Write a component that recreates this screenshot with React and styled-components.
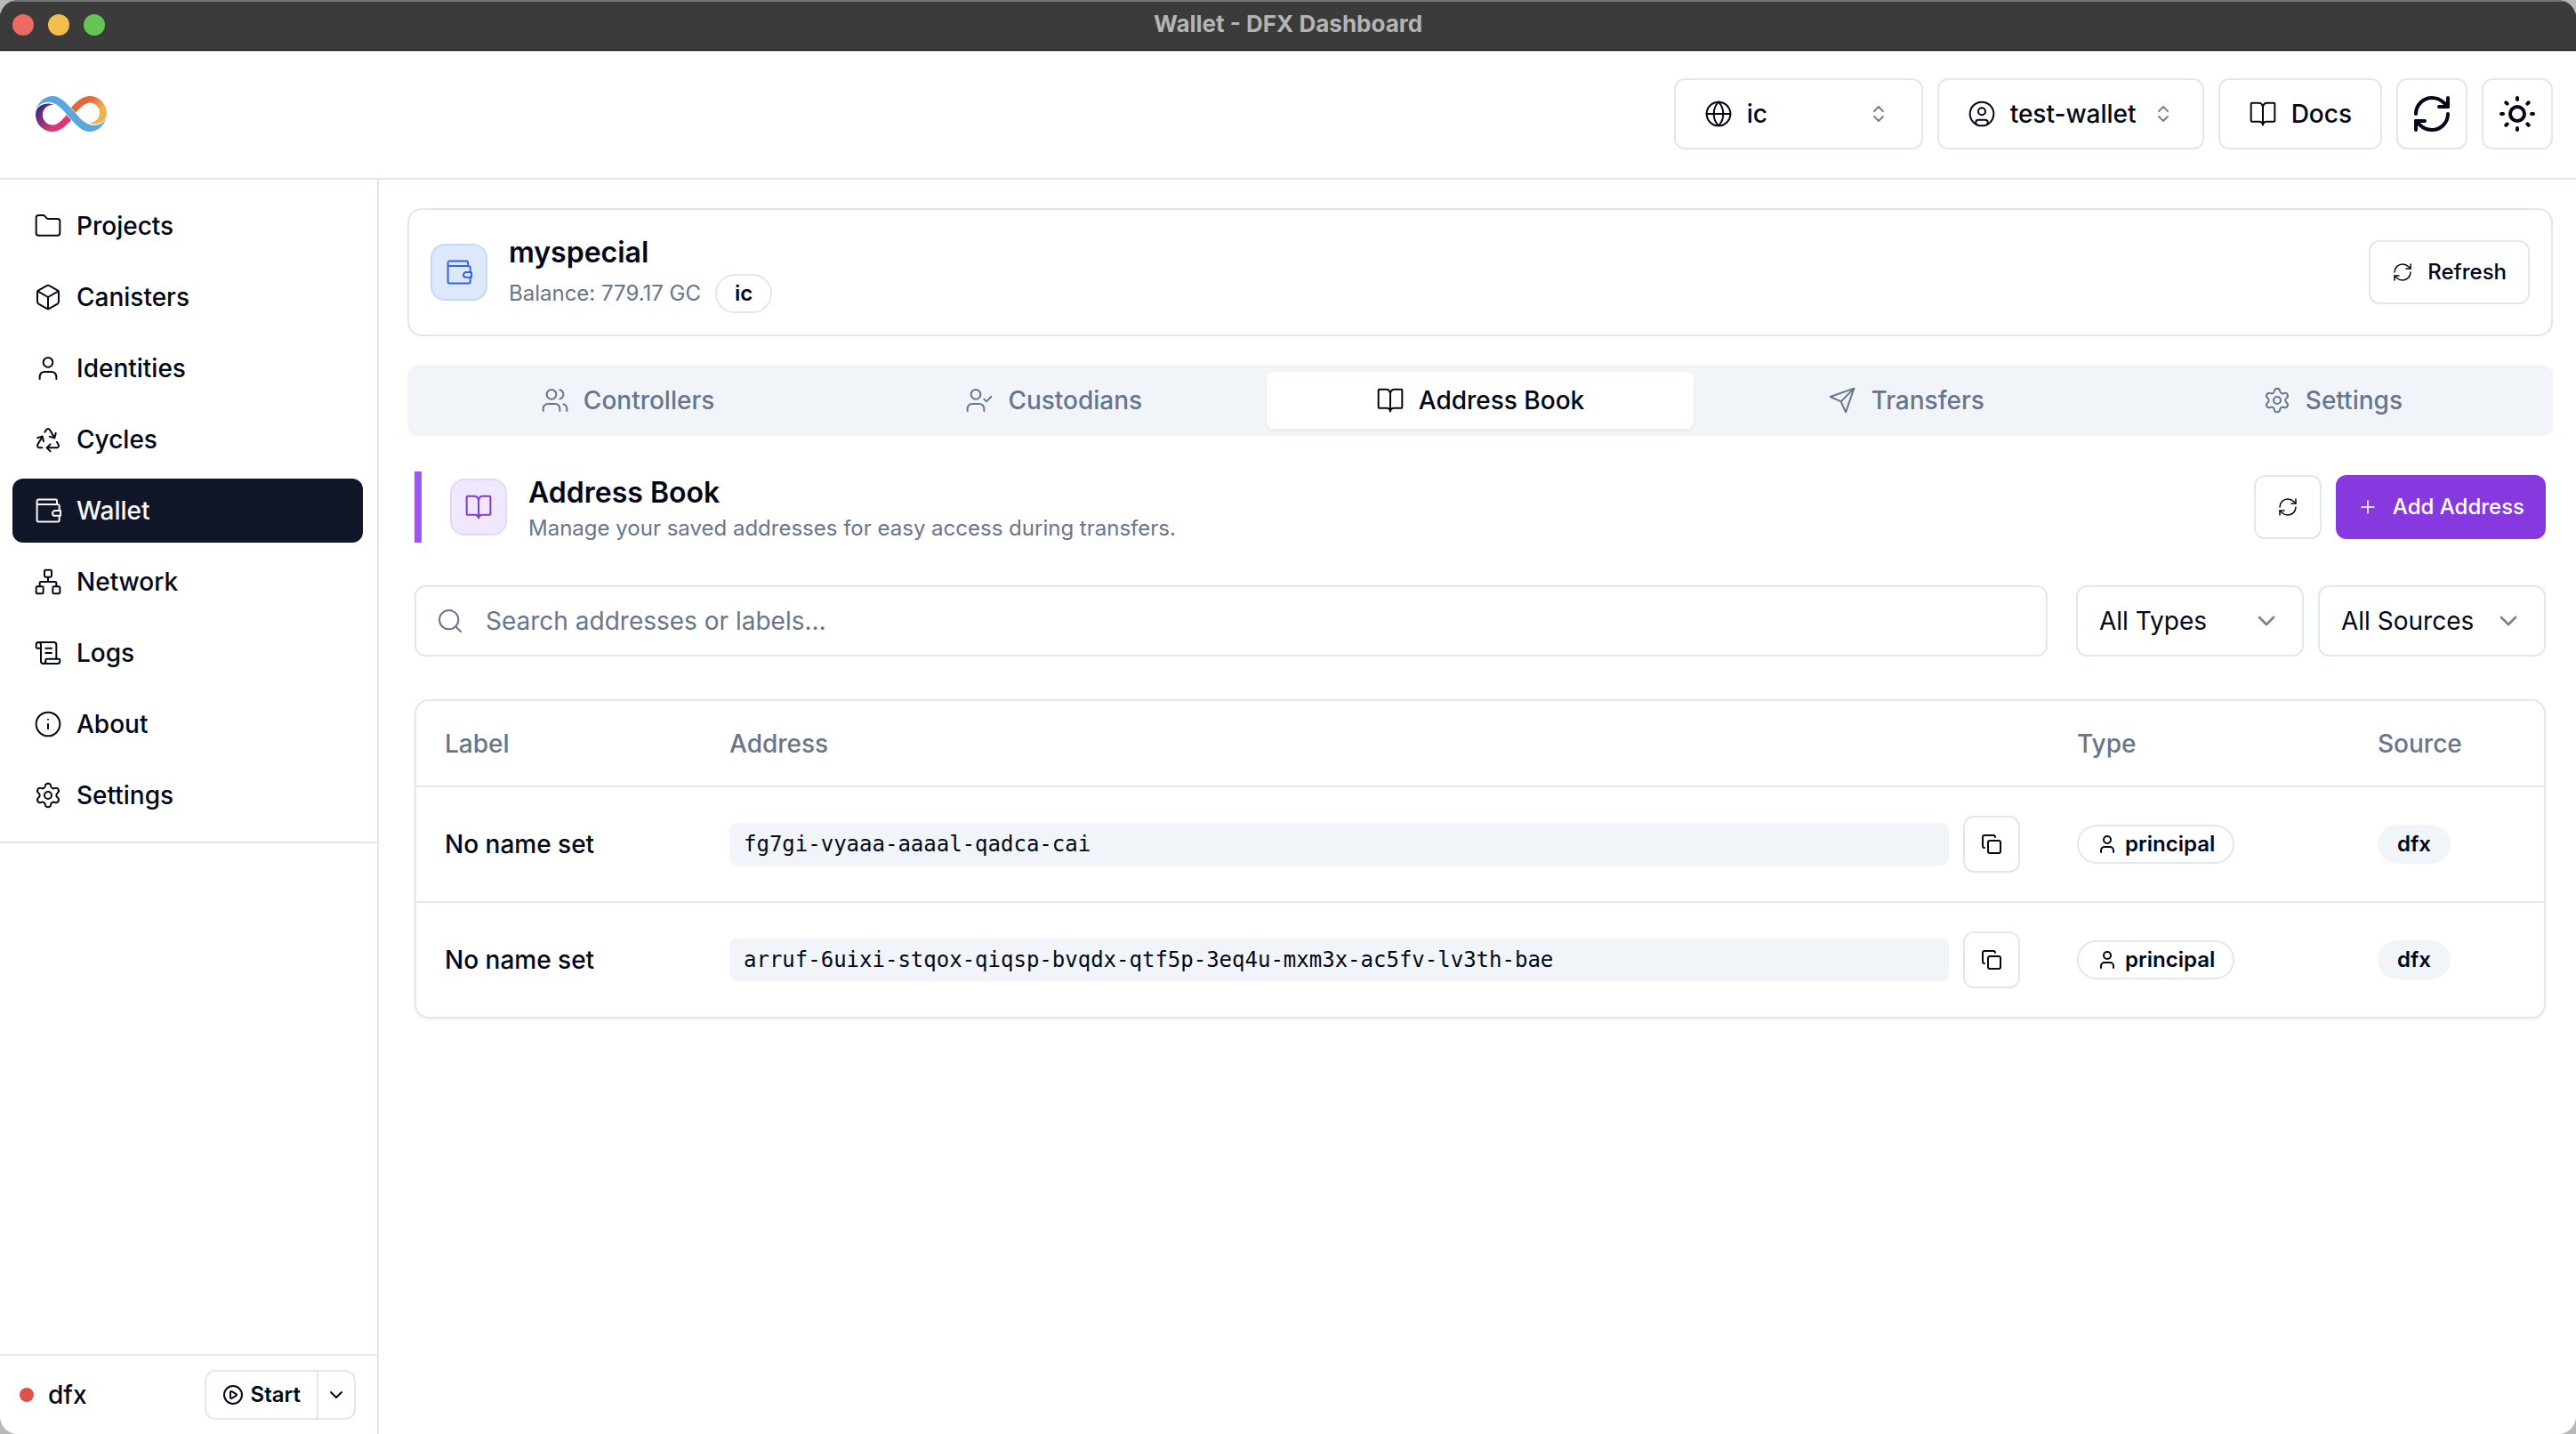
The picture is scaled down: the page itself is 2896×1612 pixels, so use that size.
import React from "react";
import styled, { createGlobalStyle, css } from "styled-components";
import {
  Box,
  ChevronDown,
  ChevronsUpDown,
  CirclePlay,
  CircleUser,
  Copy,
  Folder,
  Globe,
  Info,
  Network,
  Plus,
  Recycle,
  RefreshCw,
  ScrollText,
  Search,
  Settings,
  SunMedium,
  User,
  UserCheck,
  Users,
} from "lucide-react";

const color = {
  ink: "#020817",
  muted: "#67758d",
  line: "#e2e7ee",
  soft: "#f1f5fa",
  active: "#121629",
  purple: "#8739e0",
};

const GlobalStyle = createGlobalStyle`
  *, *::before, *::after { box-sizing: border-box; }
  html, body, #root { height: 100%; }
  body {
    margin: 0;
    background: #b9b9b9;
    color: ${color.ink};
    font: 400 28px/40px Inter, "Noto Sans", sans-serif;
    -webkit-font-smoothing: antialiased;
  }
  button, input, select { font: inherit; color: inherit; margin: 0; }
  h1, h2, p { margin: 0; }
  svg { display: block; flex: none; }
`;

const Window = styled.div`
  display: flex;
  flex-direction: column;
  min-height: 100%;
  background: #fff;
  border-radius: 20px;
  overflow: hidden;
`;

const TitleBar = styled.div`
  display: grid;
  grid-template-columns: 1fr auto 1fr;
  align-items: center;
  height: 56px;
  padding: 0 14px;
  background: #3b3b3b;
  box-shadow: inset 0 2px 0 #757575, 0 1px 0 #000, 0 2px 0 #c0c0c0;
  position: relative;
`;

const Lights = styled.div`
  display: flex;
  gap: 16px;
`;

const Light = styled.span`
  width: 24px;
  height: 24px;
  border-radius: 50%;
  background: ${(p) => p.$color};
`;

const WindowTitle = styled.div`
  padding-bottom: 2px;
  font-size: 26px;
  font-weight: 700;
  line-height: 32px;
  color: #b4b4b4;
`;

const Header = styled.header`
  display: flex;
  align-items: center;
  justify-content: space-between;
  height: 146px;
  padding: 0 26px 0 40px;
  border-bottom: 2px solid ${color.line};
`;

const Toolbar = styled.div`
  display: flex;
  gap: 16px;
`;

const outlined = css`
  background: #fff;
  border: 2px solid ${color.line};
  border-radius: 12px;
`;

const Picker = styled.label`
  ${outlined}
  display: flex;
  align-items: center;
  gap: 16px;
  width: ${(p) => p.$width}px;
  height: 80px;
  padding: 0 ${(p) => p.$padEnd ?? p.$pad}px 0 ${(p) => p.$pad}px;
  font-weight: ${(p) => p.$weight};

  select {
    flex: 1;
    min-width: 0;
    padding: 0;
    border: 0;
    background: none;
    appearance: none;
    outline: none;
  }
  svg:last-child { opacity: 0.5; }
`;

const Button = styled.button`
  ${outlined}
  display: inline-flex;
  align-items: center;
  justify-content: center;
  gap: 16px;
  height: 72px;
  padding: 0 24px;
  font-size: 24px;
  font-weight: 500;
  line-height: 32px;
  white-space: nowrap;
`;

const PrimaryButton = styled(Button)`
  border: 0;
  background: ${color.purple};
  color: #fff;
`;

const ToolButton = styled(Button)`
  height: 80px;
  padding: 0 32px;
  font-size: 28px;
  line-height: 40px;
`;

const SquareButton = styled(Button)`
  width: ${(p) => p.$size}px;
  height: ${(p) => p.$size}px;
  padding: 0;
`;

const Body = styled.div`
  display: flex;
  flex: 1;
`;

const Sidebar = styled.aside`
  display: flex;
  flex-direction: column;
  justify-content: space-between;
  flex: none;
  width: 426px;
  border-right: 2px solid ${color.line};
`;

const Nav = styled.nav`
  display: flex;
  flex-direction: column;
  gap: 8px;
  padding: 16px 16px 16px 14px;
  border-bottom: 2px solid ${color.line};
`;

const NavLink = styled.a`
  display: flex;
  align-items: center;
  gap: 16px;
  height: 72px;
  padding: 0 24px;
  border-radius: 12px;
  font-weight: 500;
  text-decoration: none;
  color: ${(p) => (p.$active ? "#f8fafc" : color.ink)};
  background: ${(p) => (p.$active ? color.active : "transparent")};
`;

const Status = styled.div`
  display: flex;
  align-items: center;
  gap: 16px;
  height: 90px;
  padding: 0 24px 0 22px;
  border-top: 2px solid ${color.line};
  font-weight: 500;
`;

const Dot = styled.span`
  width: 16px;
  height: 16px;
  border-radius: 50%;
  background: #dc524b;
`;

const SplitButton = styled.div`
  ${outlined}
  display: flex;
  height: 56px;
  margin-left: auto;
`;

const SplitPart = styled.button`
  display: flex;
  align-items: center;
  gap: 8px;
  padding: 0 ${(p) => p.$pad}px;
  border: 0;
  background: none;
  font-size: 24px;
  font-weight: 600;
  line-height: 32px;

  & + & { border-left: 2px solid ${color.line}; }
`;

const Main = styled.main`
  display: flex;
  flex-direction: column;
  flex: 1;
  min-width: 0;
  padding: 32px 26px 32px 32px;
`;

const WalletCard = styled.section`
  display: flex;
  align-items: center;
  gap: 24px;
  padding: 24px;
  border: 2px solid ${color.line};
  border-radius: 16px;
`;

const tones = {
  blue: { bg: "#dde9fb", line: "#bfdafb", ink: "#3662e8" },
  purple: { bg: "#f0e8fd", line: "#e5d7fb", ink: "#8338df" },
};

const IconTile = styled.div`
  display: grid;
  place-items: center;
  width: 64px;
  height: 64px;
  border-radius: 16px;
  border: 2px solid ${(p) => tones[p.$tone].line};
  background: ${(p) => tones[p.$tone].bg};
  color: ${(p) => tones[p.$tone].ink};
`;

const Heading = styled.div`
  flex: 1;
  min-width: 0;

  h1, h2 {
    font-size: 32px;
    font-weight: 600;
    line-height: 48px;
  }
`;

const Caption = styled.p`
  display: flex;
  align-items: center;
  gap: 16px;
  font-size: 24px;
  line-height: 32px;
  color: ${color.muted};
`;

const Badge = styled.span`
  display: inline-flex;
  align-items: center;
  gap: 8px;
  height: 44px;
  padding: 0 20px;
  border: 2px solid ${(p) => (p.$filled ? color.soft : color.line)};
  border-radius: 22px;
  background: ${(p) => (p.$filled ? color.soft : "#fff")};
  color: ${color.ink};
  font-size: 24px;
  font-weight: 600;
  line-height: 32px;
`;

const Tabs = styled.div`
  display: grid;
  grid-template-columns: repeat(5, 1fr);
  height: 80px;
  margin-top: 32px;
  padding: 8px;
  border-radius: 12px;
  background: ${color.soft};
`;

const Tab = styled.button`
  display: flex;
  align-items: center;
  justify-content: center;
  gap: 16px;
  border: 0;
  border-radius: 8px;
  font-weight: 500;
  color: ${(p) => (p.$active ? color.ink : color.muted)};
  background: ${(p) => (p.$active ? "#fff" : "transparent")};
  box-shadow: ${(p) => (p.$active ? "0 2px 4px rgba(0, 0, 0, 0.05)" : "none")};
`;

const Panel = styled.section`
  padding: 40px 8px 0;
`;

const PanelHead = styled.div`
  display: flex;
  align-items: center;
  gap: 16px;
`;

const PanelTitle = styled.div`
  display: flex;
  flex: 1;
  align-items: center;
  gap: 24px;
  padding-left: 32px;
  border-left: 8px solid #9b56ee;
`;

const Filters = styled.div`
  display: flex;
  gap: 16px;
  margin-top: 48px;
`;

const SearchBox = styled.label`
  ${outlined}
  display: flex;
  align-items: center;
  flex: 1;
  gap: 24px;
  height: 80px;
  margin-right: 16px;
  padding: 0 22px;
  color: ${color.muted};

  input {
    flex: 1;
    min-width: 0;
    padding: 0;
    border: 0;
    outline: none;
    background: none;
  }
  input::placeholder { color: ${color.muted}; opacity: 1; }
`;

const TableCard = styled.div`
  margin-top: 48px;
  border: 2px solid ${color.line};
  border-radius: 16px;
  box-shadow: 0 2px 4px rgba(0, 0, 0, 0.05);
`;

const Table = styled.table`
  width: 100%;
  table-layout: fixed;
  border-spacing: 0;
  text-align: left;

  th {
    height: 97px;
    padding: 0 32px;
    border-bottom: 2px solid ${color.line};
    font-weight: 500;
    color: ${color.muted};
  }
  td { padding: 32px; font-weight: 500; }
  tr:not(:last-child) td { border-bottom: 2px solid ${color.line}; }
`;

const Column = styled.col`
  width: ${(p) => (p.$width ? `${p.$width}px` : "auto")};
`;

const AddressCell = styled.div`
  display: flex;
  align-items: center;
  gap: 16px;
`;

const Code = styled.code`
  flex: 1;
  padding: 8px 16px;
  border-radius: 8px;
  background: ${color.soft};
  font: 400 24px/32px "DejaVu Sans Mono", monospace;
`;

function LogoRing({ fill }) {
  return (
    <path
      fill={fill}
      d="M271.6 0c-20 0-41.9 10.2-65 30.5-10.9 9.5-20.4 19.8-27.5 27.9 0 0 11.3 12.3 23.7 25.5 6.7-7.9 16.3-18.8 27.3-28.4 20.5-18 33.9-21.8 41.5-21.8 28.8 0 52.1 22.8 52.1 50.9 0 27.8-23.4 50.6-52.1 50.9-1.4 0-3-.2-5-.6 8.4 3.6 17.5 6.2 26 6.2 52.8 0 63.1-34.4 63.8-36.9 1.5-6.2 2.4-12.7 2.4-19.4C358.8 38.6 319.6 0 271.6 0z"
    />
  );
}

function Logo() {
  return (
    <svg width="80" height="40" viewBox="0 0 358.8 179.8" role="img" aria-label="Internet Computer">
      <defs>
        <linearGradient id="warm" gradientUnits="userSpaceOnUse" x1="225" y1="20" x2="349" y2="130">
          <stop offset="0.21" stopColor="#e1683a" />
          <stop offset="0.68" stopColor="#efb253" />
        </linearGradient>
        <linearGradient id="cool" gradientUnits="userSpaceOnUse" x1="225" y1="20" x2="349" y2="130">
          <stop offset="0.21" stopColor="#dc3878" />
          <stop offset="0.9" stopColor="#472a80" />
        </linearGradient>
      </defs>
      <LogoRing fill="url(#warm)" />
      <g transform="rotate(180 179.4 89.9)">
        <LogoRing fill="url(#cool)" />
      </g>
      <path
        fill="#55a9de"
        d="M127.3 59.7c-5.8-5.6-34-28.5-61-29.3C18.1 29.2 4 64.2 2.7 68.7 12 29.5 46.4.2 87.2 0c33.3 0 67 32.7 91.9 62.2 0 0 11.4 12.2 23.8 25.4 0 0 14 16.5 28.8 31 5.8 5.6 33.9 28.2 60.9 29 49.5 1.4 63.2-35.6 63.9-38.4-9.1 39.5-43.6 70.4-84.5 70.6-33.3 0-67-32.7-92-62.2 0 0-11.4-12.2-23.8-25.3 0 0-14-18.1-28.9-32.6z"
      />
    </svg>
  );
}

function StrokeIcon({ size = 32, children }) {
  return (
    <svg
      width={size}
      height={size}
      viewBox="0 0 24 24"
      fill="none"
      stroke="currentColor"
      strokeWidth="1.5"
      strokeLinecap="round"
      strokeLinejoin="round"
      aria-hidden="true"
    >
      {children}
    </svg>
  );
}

function WalletIcon({ size }) {
  return (
    <StrokeIcon size={size}>
      <path d="M19.5 6.7V3.6a1 1 0 0 0-1-1H4A1.300 1.300 0 0 0 2.700 3.900V20a1.300 1.300 0 0 0 1.300 1.300h16.200a1.300 1.300 0 0 0 1.300-1.300v-3.500M21.500 12V8a1.300 1.300 0 0 0-1.300-1.300H3" />
      <path d="M22.500 12H18a2.200 2.200 0 0 0 0 4.400h4.500z" />
    </StrokeIcon>
  );
}

function BookIcon({ size }) {
  return (
    <StrokeIcon size={size}>
      <path d="M12 6.200C11.600 4.200 10.300 2.800 8.500 2.800H2.700a.7.7 0 0 0-.7.7v14.300a.7.7 0 0 0 .7.7H9c1.700 0 2.700 1 3 2.700" />
      <path d="M12 6.200c.4-2 1.700-3.400 3.500-3.400h5.800a.7.7 0 0 1 .7.7v14.300a.7.7 0 0 1-.7.7H15c-1.700 0-2.700 1-3 2.700z" />
    </StrokeIcon>
  );
}

function SendIcon({ size }) {
  return (
    <StrokeIcon size={size}>
      <path d="m22 2-7 20-4-9-9-4Z" />
      <path d="M22 2 11 13" />
    </StrokeIcon>
  );
}

const navItems = [
  ["Projects", Folder],
  ["Canisters", Box],
  ["Identities", User],
  ["Cycles", Recycle],
  ["Wallet", WalletIcon],
  ["Network", Network],
  ["Logs", ScrollText],
  ["About", Info],
  ["Settings", Settings],
];

const tabs = [
  ["Controllers", Users],
  ["Custodians", UserCheck],
  ["Address Book", BookIcon],
  ["Transfers", SendIcon],
  ["Settings", Settings],
];

const addresses = [
  "fg7gi-vyaaa-aaaal-qadca-cai",
  "arruf-6uixi-stqox-qiqsp-bvqdx-qtf5p-3eq4u-mxm3x-ac5fv-lv3th-bae",
];

export default function App() {
  return (
    <Window>
      <GlobalStyle />
      <TitleBar>
        <Lights>
          <Light $color="#ec6a5f" />
          <Light $color="#f4be4f" />
          <Light $color="#62c554" />
        </Lights>
        <WindowTitle>Wallet - DFX Dashboard</WindowTitle>
      </TitleBar>

      <Header>
        <Logo />
        <Toolbar>
          <Picker $width={280} $pad={32} $padEnd={36} $weight={500}>
            <Globe size={32} strokeWidth={1.5} />
            <select aria-label="Network">
              <option>ic</option>
            </select>
            <ChevronsUpDown size={24} />
          </Picker>
          <Picker $width={300} $pad={32} $weight={500}>
            <CircleUser size={32} strokeWidth={1.5} />
            <select aria-label="Identity">
              <option>test-wallet</option>
            </select>
            <ChevronsUpDown size={24} />
          </Picker>
          <ToolButton>
            <BookIcon />
            Docs
          </ToolButton>
          <SquareButton $size={80} aria-label="Reload">
            <RefreshCw size={48} strokeWidth={2} />
          </SquareButton>
          <SquareButton $size={80} aria-label="Theme">
            <SunMedium size={48} />
          </SquareButton>
        </Toolbar>
      </Header>

      <Body>
        <Sidebar>
          <Nav>
            {navItems.map(([name, Icon]) => (
              <NavLink key={name} href="#" $active={name === "Wallet"}>
                <Icon size={32} strokeWidth={1.5} />
                {name}
              </NavLink>
            ))}
          </Nav>
          <Status>
            <Dot />
            dfx
            <SplitButton>
              <SplitPart $pad={18}>
                <CirclePlay size={24} strokeWidth={2} />
                Start
              </SplitPart>
              <SplitPart $pad={8} aria-label="More start options">
                <ChevronDown size={24} strokeWidth={2} />
              </SplitPart>
            </SplitButton>
          </Status>
        </Sidebar>

        <Main>
          <WalletCard>
            <IconTile $tone="blue">
              <WalletIcon />
            </IconTile>
            <Heading>
              <h1>myspecial</h1>
              <Caption>
                Balance: 779.17 GC <Badge>ic</Badge>
              </Caption>
            </Heading>
            <Button>
              <RefreshCw size={24} strokeWidth={1.5} />
              Refresh
            </Button>
          </WalletCard>

          <Tabs role="tablist">
            {tabs.map(([name, Icon]) => (
              <Tab key={name} role="tab" aria-selected={name === "Address Book"} $active={name === "Address Book"}>
                <Icon size={32} strokeWidth={1.5} />
                {name}
              </Tab>
            ))}
          </Tabs>

          <Panel>
            <PanelHead>
              <PanelTitle>
                <IconTile $tone="purple">
                  <BookIcon />
                </IconTile>
                <Heading>
                  <h2>Address Book</h2>
                  <Caption>Manage your saved addresses for easy access during transfers.</Caption>
                </Heading>
              </PanelTitle>
              <Button aria-label="Refresh addresses">
                <RefreshCw size={24} strokeWidth={1.5} />
              </Button>
              <PrimaryButton>
                <Plus size={24} strokeWidth={1.5} />
                Add Address
              </PrimaryButton>
            </PanelHead>

            <Filters>
              <SearchBox>
                <Search size={32} strokeWidth={1.5} />
                <input type="text" aria-label="Search" placeholder="Search addresses or labels..." />
              </SearchBox>
              <Picker $width={256} $pad={24} $weight={400}>
                <select aria-label="Type">
                  <option>All Types</option>
                </select>
                <ChevronDown size={32} />
              </Picker>
              <Picker $width={256} $pad={24} $weight={400}>
                <select aria-label="Source">
                  <option>All Sources</option>
                </select>
                <ChevronDown size={32} />
              </Picker>
            </Filters>

            <TableCard>
              <Table>
                <colgroup>
                  <Column $width={320} />
                  <Column />
                  <Column $width={338} />
                  <Column $width={219} />
                </colgroup>
                <thead>
                  <tr>
                    <th>Label</th>
                    <th>Address</th>
                    <th>Type</th>
                    <th>Source</th>
                  </tr>
                </thead>
                <tbody>
                  {addresses.map((address) => (
                    <tr key={address}>
                      <td>No name set</td>
                      <td>
                        <AddressCell>
                          <Code>{address}</Code>
                          <SquareButton $size={64} aria-label="Copy address">
                            <Copy size={24} />
                          </SquareButton>
                        </AddressCell>
                      </td>
                      <td>
                        <Badge>
                          <User size={24} />
                          principal
                        </Badge>
                      </td>
                      <td>
                        <Badge $filled>dfx</Badge>
                      </td>
                    </tr>
                  ))}
                </tbody>
              </Table>
            </TableCard>
          </Panel>
        </Main>
      </Body>
    </Window>
  );
}
